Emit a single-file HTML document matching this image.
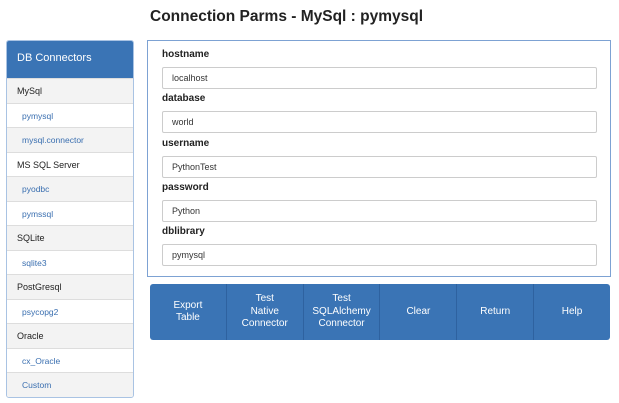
<!DOCTYPE html>
<html><head><style>
*{box-sizing:border-box;margin:0;padding:0}
body{width:619px;height:403px;background:#fff;font-family:"Liberation Sans",Arial,sans-serif;position:relative;overflow:hidden}
.title{position:absolute;left:150px;top:8px;font-size:15.5px;font-weight:bold;color:#222}
.side{position:absolute;left:6px;top:40px;width:128px;border:1px solid #a9c3e3;border-radius:3px;overflow:hidden}
.side .hd{background:#3a74b5;color:#fff;font-size:11px;height:37px;line-height:35px;padding-left:10px}
.side div.i{height:24.5px;line-height:24px;font-size:9px;border-top:1px solid #ddd;padding-left:10px;color:#222}
.side div.s{padding-left:15px;color:#3a6fb0;font-size:8.5px}
.g{background:#f3f3f3}
.form{position:absolute;left:147px;top:40px;width:464px;height:237px;border:1px solid #7da2d3}
.lab{position:absolute;left:14px;font-size:10px;font-weight:bold;color:#222}
.inp{position:absolute;left:14px;width:435px;height:22px;border:1px solid #ccc;border-radius:2px;font-size:9px;line-height:20px;padding-left:9px;color:#333}
.btns{position:absolute;left:150px;top:284px;width:460px;height:56px;background:#3a74b5;border-radius:3px;display:flex}
.btns div{flex:1;color:#fff;font-size:10px;display:flex;align-items:center;justify-content:center;text-align:center;line-height:12.5px;border-right:1px solid #2e62a0}
.btns div:last-child{border-right:none}
</style></head><body>
<div class="title">Connection Parms - MySql : pymysql</div>
<div class="side">
<div class="hd">DB Connectors</div>
<div class="i g">MySql</div>
<div class="i s">pymysql</div>
<div class="i s g">mysql.connector</div>
<div class="i">MS SQL Server</div>
<div class="i s g">pyodbc</div>
<div class="i s">pymssql</div>
<div class="i g">SQLite</div>
<div class="i s">sqlite3</div>
<div class="i g">PostGresql</div>
<div class="i s">psycopg2</div>
<div class="i g">Oracle</div>
<div class="i s">cx_Oracle</div>
<div class="i s g">Custom</div>
</div>
<div class="form">
<div class="lab" style="top:8px">hostname</div><div class="inp" style="top:26px">localhost</div>
<div class="lab" style="top:52px">database</div><div class="inp" style="top:70px">world</div>
<div class="lab" style="top:97px">username</div><div class="inp" style="top:115px">PythonTest</div>
<div class="lab" style="top:141px">password</div><div class="inp" style="top:159px">Python</div>
<div class="lab" style="top:185px">dblibrary</div><div class="inp" style="top:203px">pymysql</div>
</div>
<div class="btns">
<div>Export<br>Table</div>
<div>Test<br>Native<br>Connector</div>
<div>Test<br>SQLAlchemy<br>Connector</div>
<div>Clear</div>
<div>Return</div>
<div>Help</div>
</div>
</body></html>
